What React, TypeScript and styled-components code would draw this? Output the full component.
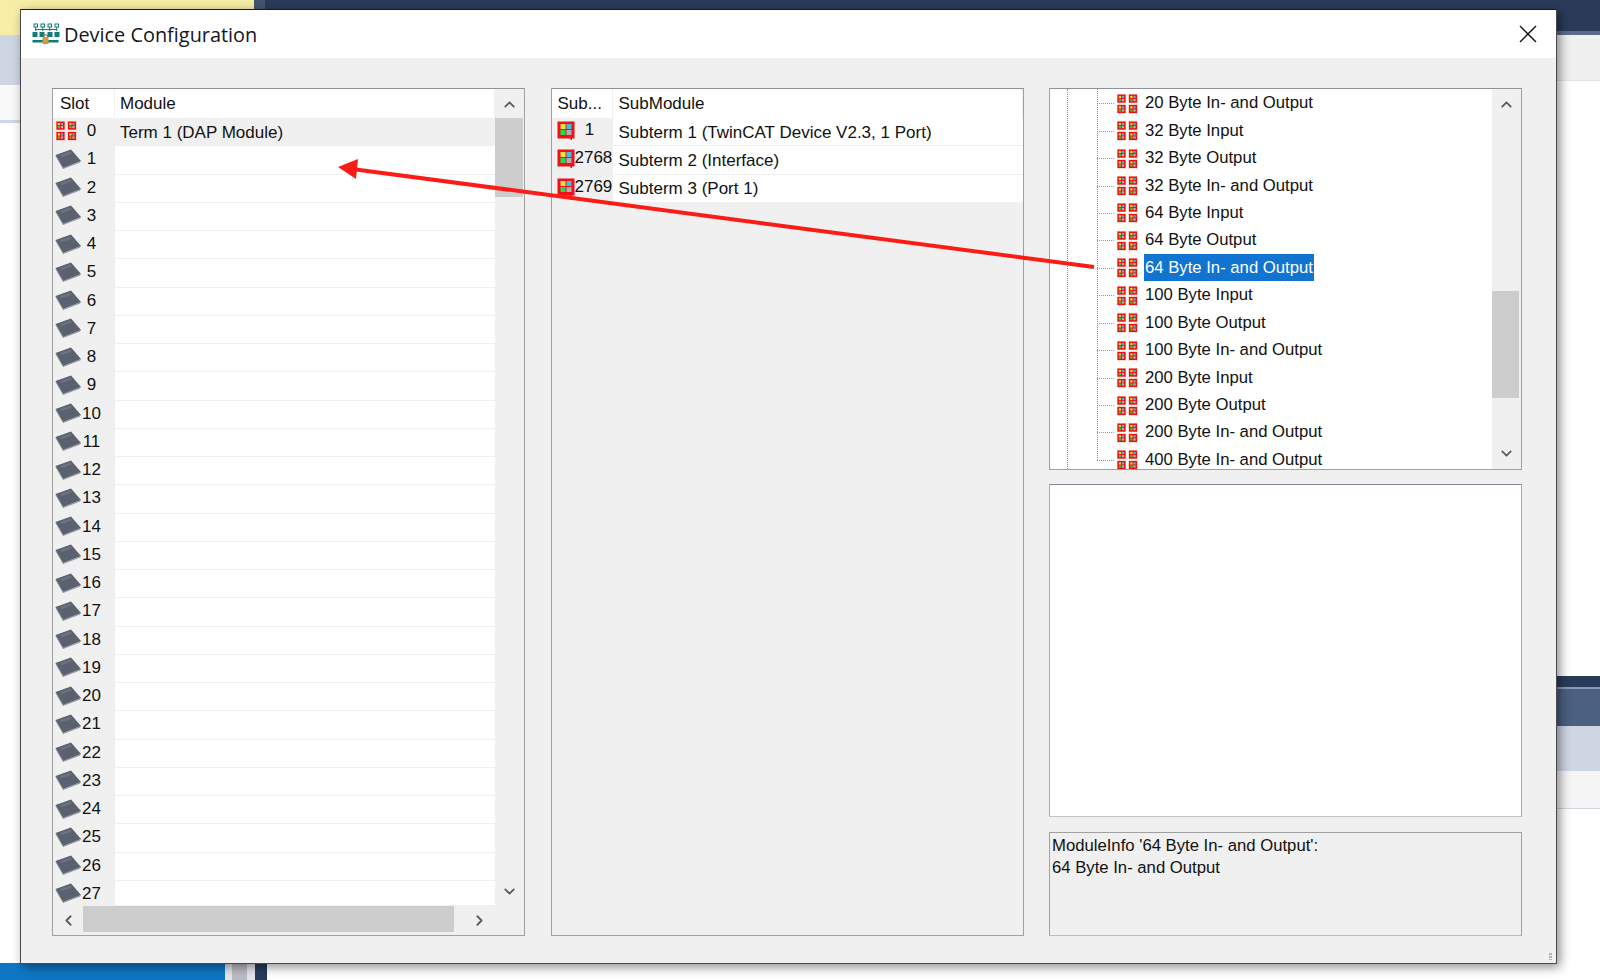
import { ChevronDown, ChevronLeft, ChevronRight, ChevronUp } from 'lucide-react';
import styled, { createGlobalStyle } from 'styled-components';

const GlobalStyle = createGlobalStyle`
  html, body {
    margin: 0;
    padding: 0;
    background: #fff;
  }
  * {
    box-sizing: border-box;
  }
`;

const listFont = `"Liberation Sans", Arial, sans-serif`;

//Desktop behind the dialog
const Desktop = styled.div`
  position: relative;
  width: 1600px;
  height: 980px;
  overflow: hidden;
  display: flex;
  flex-direction: column;
  background: #fff;
`;

const TopStrip = styled.div`
  display: flex;
  height: 10px;
  flex: none;
`;

const TopPart = styled.div<{ $w?: number; $bg: string }>`
  flex: ${(p) => (p.$w ? `0 0 ${p.$w}px` : '1')};
  background: ${(p) => p.$bg};
`;

const MiddleStrip = styled.div`
  display: flex;
  justify-content: space-between;
  height: 953px;
  flex: none;
`;

const SideColumn = styled.div<{ $w: number }>`
  width: ${(p) => p.$w}px;
  display: flex;
  flex-direction: column;
`;

const SideBand = styled.div<{ $h: number; $bg: string }>`
  height: ${(p) => p.$h}px;
  flex: none;
  background: ${(p) => p.$bg};
`;

const BottomStrip = styled.div`
  display: flex;
  flex: 1;
`;

//Dialog
const Dialog = styled.div`
  position: absolute;
  left: 20px;
  top: 9px;
  width: 1537px;
  height: 955px;
  display: flex;
  flex-direction: column;
  background: #f0f0f0;
  border: 1px solid #4a4a4a;
  border-top-color: #1c1c1c;
  box-shadow: 3px 3px 10px rgba(0, 0, 0, 0.45);
`;

const TitleBar = styled.div`
  height: 48px;
  flex: none;
  display: flex;
  align-items: center;
  background: #fff;
  padding: 0 19px 0 11px;
`;

const TitleText = styled.span`
  margin-left: 4px;
  flex: 1;
  font-family: 'Open Sans', sans-serif;
  font-size: 19.9px;
  color: #14141e;
`;

const Content = styled.div`
  flex: 1;
  min-height: 0;
  display: grid;
  grid-template-columns: 473px 473px 474px;
  column-gap: 25.5px;
  padding: 30px 0 27px 31px;
`;

const Panel = styled.div`
  display: flex;
  flex-direction: column;
  min-height: 0;
  border: 1px solid #a0a0a0;
  border-top-color: #8d9199;
  background: #f0f0f0;
  overflow: hidden;
`;

const PanelMain = styled.div`
  flex: 1;
  min-height: 0;
  display: flex;
`;

const ListArea = styled.div`
  flex: 1;
  min-width: 0;
  overflow: hidden;
  display: flex;
  flex-direction: column;
`;

const ListRow = styled.div<{ $col: number; $h: number }>`
  display: grid;
  grid-template-columns: ${(p) => p.$col}px 1fr;
  height: ${(p) => p.$h}px;
  flex: none;
  font-family: ${listFont};
  font-size: 17px;
  color: #111;
`;

const HeadCell = styled.div<{ $pad: number }>`
  display: flex;
  align-items: center;
  background: #fff;
  padding-left: ${(p) => p.$pad}px;
  border-right: 1px solid #f0f0f0;
  overflow: hidden;
  white-space: nowrap;
`;

const IconCell = styled.div<{ $pad: number }>`
  display: flex;
  align-items: center;
  background: #f0f0f0;
  overflow: hidden;
  padding-left: ${(p) => p.$pad}px;
`;

const IconSlot = styled.span<{ $w: number }>`
  width: ${(p) => p.$w}px;
  flex: none;
  display: flex;
  margin-top: -3px;
`;

const SlotNumber = styled.span`
  flex: 1;
  margin-left: -14px;
  text-align: center;
  white-space: nowrap;
  margin-top: -2px;
`;

const SubNumber = styled.span`
  width: 30px;
  flex: none;
  text-align: center;
  white-space: nowrap;
  margin-top: -4px;
`;

const TextCell = styled.div<{ $active?: boolean; $pad: number }>`
  display: flex;
  align-items: center;
  padding: 2px 0 0 ${(p) => p.$pad}px;
  background: ${(p) => (p.$active ? '#f0f0f0' : '#fff')};
  border-bottom: 1px solid #f0f0f0;
  white-space: nowrap;
`;

//Scroll bars
const VBar = styled.div<{ $w: number }>`
  width: ${(p) => p.$w}px;
  flex: none;
  display: flex;
  flex-direction: column;
  background: #f0f0f0;
`;

const ArrowBox = styled.div<{ $h: number }>`
  height: ${(p) => p.$h}px;
  flex: none;
  display: flex;
  align-items: center;
  justify-content: center;
  color: #5c5c5c;
`;

const VTrack = styled.div`
  flex: 1;
  min-height: 0;
`;

const VThumb = styled.div<{ $top: number; $h: number; $right: number }>`
  margin-top: ${(p) => p.$top}px;
  margin-right: ${(p) => p.$right}px;
  height: ${(p) => p.$h}px;
  background: #cdcdcd;
`;

const HBar = styled.div`
  height: 30px;
  flex: none;
  display: flex;
  align-items: stretch;
  background: #f0f0f0;
`;

const HArrow = styled.div<{ $w: number }>`
  width: ${(p) => p.$w}px;
  flex: none;
  display: flex;
  align-items: center;
  justify-content: center;
  color: #5c5c5c;
`;

const HThumb = styled.div`
  width: 371px;
  flex: none;
  margin: 1px 0 3px;
  background: #cdcdcd;
`;

//Right column
const SideStack = styled.div`
  display: grid;
  grid-template-rows: 382px 333px 1fr;
  row-gap: 14px;
  min-height: 0;
  width: 473px;
`;

const TreeBox = styled(Panel)`
  flex-direction: row;
  background: #fff;
`;

const TreeList = styled.div`
  position: relative;
  flex: 1;
  min-width: 0;
  overflow: hidden;
  padding-top: 1px;
`;

const TreeRow = styled.div`
  height: 27.45px;
  display: flex;
  align-items: center;
  padding-left: 47px;
  font-family: ${listFont};
  font-size: 16.7px;
  color: #111;
  white-space: nowrap;
`;

const TreeGuide = styled.div<{ $left: number; $h?: number }>`
  position: absolute;
  left: ${(p) => p.$left}px;
  top: 0;
  bottom: ${(p) => (p.$h ? 'auto' : '0')};
  height: ${(p) => (p.$h ? `${p.$h}px` : 'auto')};
  border-left: 1px dotted #8c8c8c;
`;

const TreeBranch = styled.span`
  width: 17px;
  flex: none;
  border-top: 1px dotted #9a9a9a;
  margin-right: 2px;
`;

const TreeLabel = styled.span<{ $selected?: boolean }>`
  margin: -2px 0 0 6px;
  height: 27px;
  line-height: 27px;
  padding: 0 1px;
  background: ${(p) => (p.$selected ? '#1174d0' : 'transparent')};
  color: ${(p) => (p.$selected ? '#fff' : '#111')};
`;

const BlankBox = styled.div`
  background: #fff;
  border: 1px solid #a8a8a8;
  border-top-color: #80868f;
  border-bottom-color: #c4c4c4;
`;

const InfoBox = styled.div`
  margin-top: 1px;
  border: 1px solid #a0a0a0;
  border-bottom-color: #bcbcbc;
  padding: 2px 2px;
  font-family: ${listFont};
  font-size: 16.7px;
  line-height: 21.5px;
  color: #111;
`;

const Grip = styled.div`
  position: absolute;
  right: 4px;
  bottom: 3px;
  width: 3px;
  height: 7px;
  background: repeating-linear-gradient(#b4b4b4 0 2px, #f0f0f0 2px 3px);
`;

const ArrowOverlay = styled.svg`
  position: absolute;
  left: 0;
  top: 0;
  pointer-events: none;
`;

const DrawnIcon = styled.svg`
  flex: none;
`;

//Small drawings
const cellColors = ['#f6e23a', '#38c7e0', '#2bd04a', '#b7b7b7'];

const Tile = ({ x, y }: { x: number; y: number }) => (
  <g transform={`translate(${x} ${y})`}>
    <rect x={-0.5} y={-0.5} width={9} height={9} fill="#ffb0b0" />
    <rect width={8} height={8} fill="#f60a0a" />
    {cellColors.map((c, i) => (
      <rect key={c} x={1.3 + (i % 2) * 3.1} y={1.3 + Math.floor(i / 2) * 3.1} width={2.2} height={2.2} fill={c} />
    ))}
  </g>
);

const ModuleIcon = () => (
  <DrawnIcon width={22} height={20} viewBox="0 0 22 20">
    <Tile x={1.5} y={0.6} />
    <Tile x={13} y={0.6} />
    <Tile x={1.5} y={11} />
    <Tile x={13} y={11} />
  </DrawnIcon>
);

const ChipIcon = () => (
  <DrawnIcon width={27} height={20} viewBox="0 0 27 20">
    <polygon points="0.5,6 16,0.5 26,12 8,19" fill="#5a626f" />
    <polygon points="0.5,6 8,19 26,12 25,13.5 8,20 1,8" fill="#8a8f98" />
    <polygon points="5,6 15.5,2.5 17,4.5 6.5,8" fill="#6d7480" />
  </DrawnIcon>
);

const SubIcon = () => (
  <DrawnIcon width={18} height={19} viewBox="0 0 18 19">
    <path d="M0.5 0.5h17v17h-2.5v1.5h-1.5v-1.5h-13z" fill="#f40d1a" />
    <rect x={3.5} y={3} width={5} height={5} fill="#f6e23a" />
    <rect x={9.5} y={3} width={5} height={5} fill="#38c7e0" />
    <rect x={3.5} y={9} width={5} height={5} fill="#1fe04a" />
    <rect x={9.5} y={9} width={5} height={5} fill="#b0b0b0" />
  </DrawnIcon>
);

const NetworkIcon = () => (
  <DrawnIcon width={28} height={22} viewBox="0 0 28 22">
    <g fill="none" stroke="#127a7a" strokeWidth={1}>
      {[2, 9, 16, 23].map((x) => (
        <g key={x}>
          <rect x={x} y={1} width={3.5} height={3} />
          <path d={`M${x + 1.7} 4v4`} />
          <path d={`M${x + 1.7} 10v4`} />
        </g>
      ))}
      <path d="M3 6.5h22" />
    </g>
    {[0.5, 7.5, 15.5, 22.5].map((x) => (
      <rect key={x} x={x} y={9} width={5} height={5} fill="#127a7a" />
    ))}
    <rect x={0.5} y={17} width={26} height={2.5} fill="#127a7a" />
    <rect x={10.5} y={14} width={6} height={7} fill="#d39a3c" />
    <path d="M11.5 14v-2h4v2" fill="none" stroke="#8a6a2a" strokeWidth={1} />
  </DrawnIcon>
);

const CloseIcon = () => (
  <DrawnIcon width={18} height={18} viewBox="0 0 18 18">
    <path d="M1 1l16 16M17 1L1 17" stroke="#111" strokeWidth={1.4} />
  </DrawnIcon>
);

//Data
const slots = Array.from({ length: 28 }, (_, i) => i);

const subTerms = [
  { id: '1', name: 'Subterm 1 (TwinCAT Device V2.3, 1 Port)' },
  { id: '2768', name: 'Subterm 2 (Interface)' },
  { id: '2769', name: 'Subterm 3 (Port 1)' },
];

const treeItems = [
  '20 Byte In- and Output',
  '32 Byte Input',
  '32 Byte Output',
  '32 Byte In- and Output',
  '64 Byte Input',
  '64 Byte Output',
  '64 Byte In- and Output',
  '100 Byte Input',
  '100 Byte Output',
  '100 Byte In- and Output',
  '200 Byte Input',
  '200 Byte Output',
  '200 Byte In- and Output',
  '400 Byte In- and Output',
];

const App = () => {
  return (
    <>
      <GlobalStyle />
      <Desktop>
        <TopStrip>
          <TopPart $w={254} $bg="#f8eda6" />
          <TopPart $w={11} $bg="#46556f" />
          <TopPart $bg="#2a3b5a" />
        </TopStrip>
        <MiddleStrip>
          <SideColumn $w={21}>
            <SideBand $h={25} $bg="#f8eda6" />
            <SideBand $h={50} $bg="#ced6e4" />
            <SideBand $h={35} $bg="#f9f9f9" />
            <SideBand $h={3} $bg="#cfd6e6" />
          </SideColumn>
          <SideColumn $w={44}>
            <SideBand $h={21} $bg="#2a3b5a" />
            <SideBand $h={4} $bg="#5a6c8c" />
            <SideBand $h={45} $bg="#f0f0f0" />
            <SideBand $h={1} $bg="#e4e4e4" />
            <SideBand $h={595} $bg="#ffffff" />
            <SideBand $h={11} $bg="#2a3b5a" />
            <SideBand $h={2} $bg="#8a9ab4" />
            <SideBand $h={37} $bg="#4b5f80" />
            <SideBand $h={45} $bg="#ced6e4" />
            <SideBand $h={37} $bg="#f5f5f5" />
            <SideBand $h={1} $bg="#d4d4e0" />
          </SideColumn>
        </MiddleStrip>
        <BottomStrip>
          <TopPart $w={225} $bg="#0f76c6" />
          <TopPart $w={7} $bg="#e4e4ea" />
          <TopPart $w={15} $bg="#b9bcc4" />
          <TopPart $w={8} $bg="#e4e4ea" />
          <TopPart $w={12} $bg="#2a3b5a" />
          <TopPart $bg="#ffffff" />
        </BottomStrip>

        <Dialog>
          <TitleBar>
            <NetworkIcon />
            <TitleText>Device Configuration</TitleText>
            <CloseIcon />
          </TitleBar>
          <Content>
            <Panel>
              <PanelMain>
                <ListArea>
                  <ListRow $col={62} $h={29}>
                    <HeadCell $pad={7}>Slot</HeadCell>
                    <HeadCell $pad={5}>Module</HeadCell>
                  </ListRow>
                  {slots.map((slot) => (
                    <ListRow key={slot} $col={62} $h={28.25}>
                      <IconCell $pad={2}>
                        <IconSlot $w={27}>{slot === 0 ? <ModuleIcon /> : <ChipIcon />}</IconSlot>
                        <SlotNumber>{slot}</SlotNumber>
                      </IconCell>
                      <TextCell $pad={5} $active={slot === 0}>{slot === 0 ? 'Term 1 (DAP Module)' : ''}</TextCell>
                    </ListRow>
                  ))}
                </ListArea>
                <VBar $w={29}>
                  <ArrowBox $h={31}><ChevronUp size={17} strokeWidth={2.6} /></ArrowBox>
                  <VTrack><VThumb $top={-2} $h={79} $right={1} /></VTrack>
                  <ArrowBox $h={27}><ChevronDown size={17} strokeWidth={2.6} /></ArrowBox>
                </VBar>
              </PanelMain>
              <HBar>
                <HArrow $w={30}><ChevronLeft size={17} strokeWidth={2.6} /></HArrow>
                <HThumb />
                <HArrow $w={50}><ChevronRight size={17} strokeWidth={2.6} /></HArrow>
              </HBar>
            </Panel>

            <Panel>
              <ListArea>
                <ListRow $col={61} $h={29}>
                  <HeadCell $pad={6}>Sub...</HeadCell>
                  <HeadCell $pad={6}>SubModule</HeadCell>
                </ListRow>
                {subTerms.map((term) => (
                  <ListRow key={term.id} $col={61} $h={28.25}>
                    <IconCell $pad={5}>
                      <IconSlot $w={18}><SubIcon /></IconSlot>
                      <SubNumber>{term.id}</SubNumber>
                    </IconCell>
                    <TextCell $pad={6}>{term.name}</TextCell>
                  </ListRow>
                ))}
              </ListArea>
            </Panel>

            <SideStack>
              <TreeBox>
                <TreeList>
                  <TreeGuide $left={17} />
                  <TreeGuide $left={47} $h={371} />
                  {treeItems.map((item) => (
                    <TreeRow key={item}>
                      <TreeBranch />
                      <ModuleIcon />
                      <TreeLabel $selected={item === '64 Byte In- and Output'}>{item}</TreeLabel>
                    </TreeRow>
                  ))}
                </TreeList>
                <VBar $w={29}>
                  <ArrowBox $h={30}><ChevronUp size={17} strokeWidth={2.6} /></ArrowBox>
                  <VTrack><VThumb $top={172} $h={107} $right={2} /></VTrack>
                  <ArrowBox $h={32}><ChevronDown size={17} strokeWidth={2.6} /></ArrowBox>
                </VBar>
              </TreeBox>
              <BlankBox />
              <InfoBox>
                ModuleInfo '64 Byte In- and Output':
                <br />
                64 Byte In- and Output
              </InfoBox>
            </SideStack>
          </Content>
          <Grip />
        </Dialog>

        <ArrowOverlay width={1600} height={980} viewBox="0 0 1600 980">
          <path d="M1094 267L352 169" stroke="#fb1c16" strokeWidth={4} fill="none" />
          <polygon points="338,167 358,159 356,179" fill="#fb1c16" />
        </ArrowOverlay>
      </Desktop>
    </>
  );
};

export default App;
